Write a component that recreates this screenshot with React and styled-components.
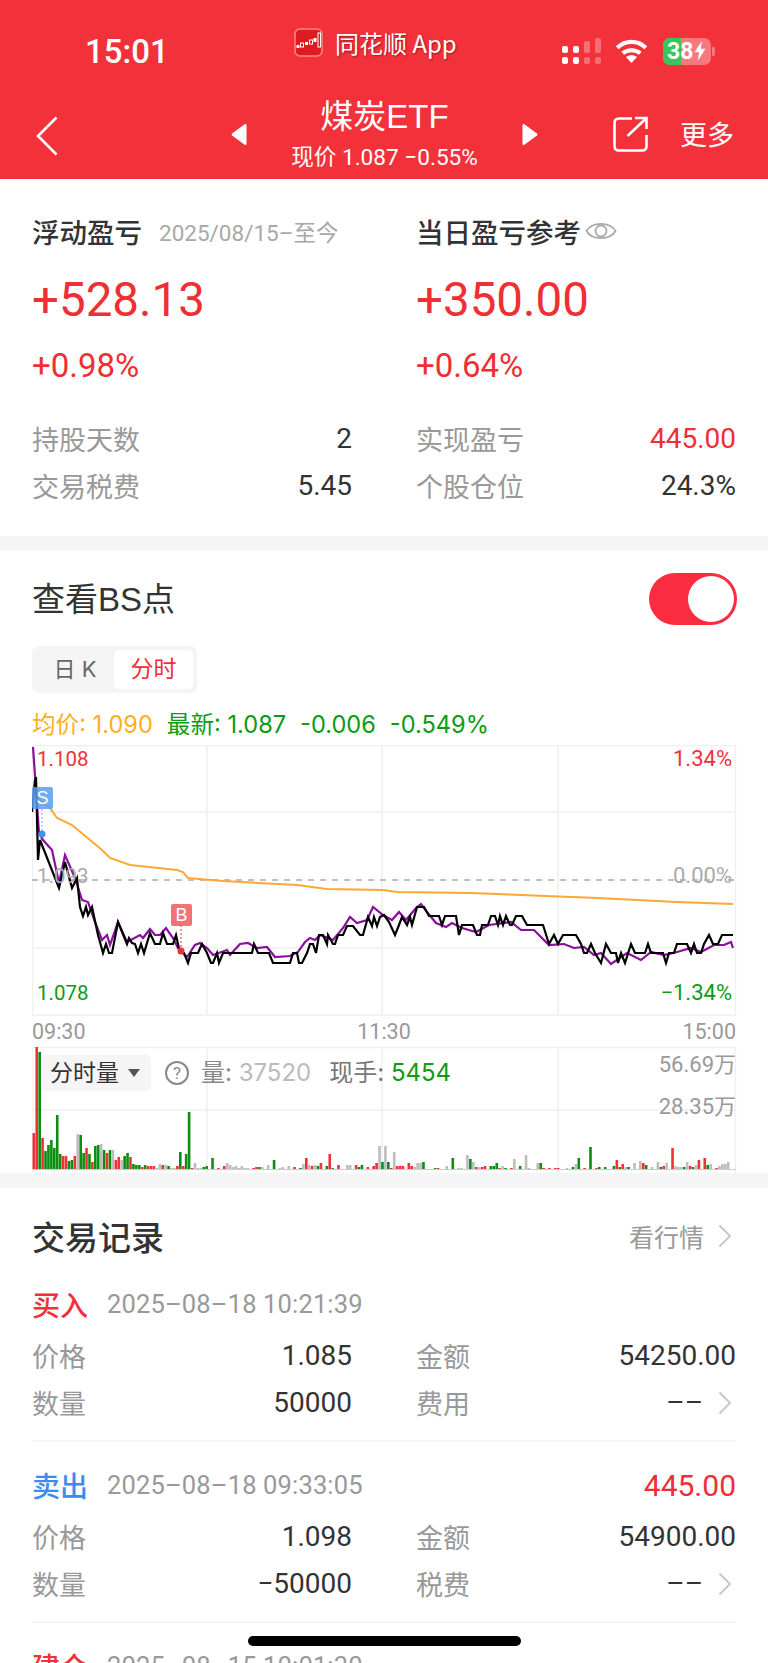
import React from "react";
import styled, { createGlobalStyle } from "styled-components";

const RED = "#ee2f35";
const GREEN = "#0a9c12";
const NUM = `Roboto, "Noto Sans CJK SC", sans-serif`;
const CJK = `"Noto Sans CJK SC", Roboto, sans-serif`;
const UI = `Inter, "Noto Sans CJK SC", sans-serif`;
const LATIN = `"Liberation Sans", "Noto Sans CJK SC", sans-serif`;

const GlobalStyle = createGlobalStyle`
  html, body { margin: 0; padding: 0; background: #fff; }
  body { font-family: ${CJK}; }
  * { box-sizing: border-box; }
`;

const Page = styled.div`
  position: relative;
  width: 768px;
  height: 1663px;
  overflow: hidden;
  background: #f5f5f5;
`;

/* header */
const Header = styled.header`
  height: 179px;
  background: #f3313b;
  color: #fff;
`;
const StatusBar = styled.div`
  display: grid;
  grid-template-columns: 209px 268px 1fr;
  grid-template-rows: 88px;
  padding-left: 85px;
`;
const Clock = styled.div`
  font: 500 33px/104px ${NUM};
`;
const AppBadge = styled.div`
  display: flex;
  align-items: center;
  gap: 12px;
  height: 88px;
  padding-bottom: 4px;
  font: 400 24px ${CJK};
  text-shadow: 1px 1px 2px rgba(90, 0, 0, 0.55);
`;
const StatusIcons = styled.div`
  display: flex;
  align-items: center;
  padding-top: 14px;
  gap: 15px;
`;
const Signal = styled.div`
  display: grid;
  grid-template-columns: repeat(4, 6px);
  column-gap: 5px;
  row-gap: 4px;
  align-items: end;
  width: 38px;
`;
const SignalDot = styled.i`
  display: block;
  height: ${(p) => p.$h}px;
  border-radius: 2px;
  background: rgba(255, 255, 255, ${(p) => (p.$dim ? 0.3 : 1)});
`;
const Battery = styled.div`
  position: relative;
  display: flex;
  width: 48px;
  height: 27px;
  border-radius: 7px;
  overflow: hidden;
  background: rgba(255, 255, 255, 0.35);
`;
const BatteryFill = styled.div`
  width: 18px;
  background: #35c759;
`;
const BatteryLabel = styled.div`
  position: absolute;
  inset: 0;
  display: flex;
  align-items: center;
  padding-left: 4px;
  font: 700 23px/27px ${NUM};
`;
const BatteryNub = styled.i`
  width: 3px;
  height: 9px;
  margin-left: -14px;
  border-radius: 0 2px 2px 0;
  background: rgba(255, 255, 255, 0.35);
`;
const NavBar = styled.div`
  display: grid;
  grid-template-columns: 231px 1fr 230px;
  height: 91px;
`;
const NavLeft = styled.div`
  padding: 28px 0 0 36px;
`;
const NavCenter = styled.div`
  display: flex;
  justify-content: space-between;
  align-items: center;
  width: 307px;
  height: 91px;
  padding-top: 1px;
`;
const Ticker = styled.div`
  text-align: center;
`;
const TickerName = styled.div`
  font: 400 33px/38px ${LATIN};
`;
const TickerQuote = styled.div`
  font: 400 22.6px/26px ${NUM};
  margin-top: 9px;
  white-space: nowrap;
`;
const NavRight = styled.div`
  display: flex;
  justify-content: flex-end;
  align-items: center;
  gap: 32px;
  padding: 0 34px 0 0;
  font: 400 27px ${CJK};
`;

/* cards */
const Card = styled.section`
  display: flow-root;
  background: #fff;
  padding: 0 32px;
  margin-bottom: 15px;
`;
const SummaryGrid = styled.div`
  display: grid;
  grid-template-columns: 320px 320px;
  column-gap: 64px;
  height: 357px;
  padding-top: 32px;
`;
const SummaryTitle = styled.div`
  display: flex;
  align-items: center;
  height: 40px;
  font: 500 27.5px/40px ${CJK};
  color: #333;
  white-space: nowrap;
`;
const SummarySub = styled.span`
  font: 400 22.5px ${NUM};
  color: #a8a8a8;
  margin-left: 17px;
`;
const BigValue = styled.div`
  font: 450 47.5px/60px ${NUM};
  color: ${RED};
  margin-top: 19px;
`;
const Percent = styled.div`
  font: 400 33px/40px ${NUM};
  color: ${RED};
  margin-top: 16px;
  margin-bottom: 29px;
`;
const StatRow = styled.div`
  display: flex;
  justify-content: space-between;
  align-items: center;
  height: 47px;
`;
const StatLabel = styled.span`
  font: 400 27px ${CJK};
  color: #999;
`;
const StatValue = styled.span`
  font: 450 ${(p) => p.$size || 28}px ${NUM};
  color: ${(p) => p.$color || "#333"};
`;

/* BS chart */
const ChartTitleRow = styled.div`
  display: flex;
  justify-content: space-between;
  align-items: center;
  height: 52px;
  margin-top: 22px;
`;
const ChartTitle = styled.h2`
  margin: 0 0 4px;
  font: 400 33px ${LATIN};
  color: #333;
`;
const Toggle = styled.div`
  display: flex;
  align-items: center;
  justify-content: flex-end;
  width: 88px;
  height: 52px;
  margin-right: -1px;
  padding-right: 3px;
  border-radius: 26px;
  background: #fb2b40;
  i {
    width: 46px;
    height: 46px;
    border-radius: 50%;
    background: #fff;
  }
`;
const Tabs = styled.div`
  display: flex;
  width: 165px;
  height: 47px;
  margin-top: 21px;
  padding: 4px;
  border-radius: 7px;
  background: #f5f5f5;
`;
const Tab = styled.div`
  width: ${(p) => (p.$active ? 79 : 78)}px;
  border-radius: 5px;
  background: ${(p) => (p.$active ? "#fff" : "transparent")};
  color: ${(p) => (p.$active ? "#ee2f38" : "#666")};
  font: 400 ${(p) => (p.$active ? 23 : 22)}px/39px ${UI};
  text-align: center;
`;
const Legend = styled.div`
  display: flex;
  height: 32px;
  margin-top: 16px;
  font: 400 23.6px/32px ${UI};
  white-space: nowrap;
`;
const LegendItem = styled.span`
  color: ${(p) => p.$color};
  margin-right: 14px;
`;
const ChartWrap = styled.div`
  position: relative;
  width: 705px;
  height: 271px;
  margin-top: 4px;
`;
const Svg = styled.svg`
  display: block;
`;
const AxisLabel = styled.span`
  position: absolute;
  top: ${(p) => p.$top}px;
  ${(p) => (p.$right !== undefined ? `right: ${p.$right}px;` : `left: ${p.$left}px;`)}
  font: 400 ${(p) => p.$size || 20.5}px/24px ${NUM};
  color: ${(p) => p.$color};
`;
const Marker = styled.span`
  position: absolute;
  left: ${(p) => p.$left}px;
  top: ${(p) => p.$top}px;
  width: 21px;
  height: 22px;
  border-radius: 2px;
  background: ${(p) => p.$bg};
  color: #fff;
  font: 400 18px/22px "Liberation Sans", sans-serif;
  text-align: center;
`;
const TimeAxis = styled.div`
  display: flex;
  justify-content: space-between;
  height: 31px;
  font: 400 21.5px/31px ${NUM};
  color: #999;
`;
const VolumeWrap = styled.div`
  position: relative;
  width: 705px;
  height: 126px;
`;
const VolumeBar = styled.div`
  position: absolute;
  left: 10px;
  top: 8px;
  display: flex;
  align-items: center;
  font: 400 24px/36px ${UI};
  white-space: nowrap;
`;
const VolumeChip = styled.div`
  display: flex;
  align-items: center;
  gap: 9px;
  width: 109px;
  height: 36px;
  padding-left: 8px;
  border-radius: 4px;
  background: #f5f5f5;
  color: #333;
  font-size: 23px;
  i {
    width: 0;
    height: 0;
    border: 6px solid transparent;
    border-top: 8px solid #555;
    border-bottom: 0;
  }
`;
const HelpIcon = styled.span`
  width: 24px;
  height: 24px;
  margin: 0 12px 0 14px;
  border: 2px solid #888;
  border-radius: 50%;
  color: #888;
  font: 400 17px/20px ${NUM};
  text-align: center;
`;
const VolumeText = styled.span`
  color: ${(p) => p.$color};
  margin-right: ${(p) => p.$gap || 0}px;
`;

/* trades */
const TradesHead = styled.div`
  display: flex;
  justify-content: space-between;
  align-items: center;
  height: 50px;
  margin-top: 23px;
`;
const TradesTitle = styled.h2`
  margin: 0;
  font: 500 33px ${CJK};
  color: #333;
`;
const MoreLink = styled.div`
  display: flex;
  align-items: center;
  gap: 14px;
  padding-right: 4px;
  font: 400 25px ${CJK};
  color: #999;
`;
const Trade = styled.div`
  padding-top: 21px;
  padding-bottom: 14px;
  border-bottom: 2px solid #f6f6f6;
`;
const TradeHead = styled.div`
  display: flex;
  align-items: center;
  height: 44px;
  margin-top: ${(p) => p.$top || 0}px;
  margin-bottom: 6px;
`;
const TradeSide = styled.span`
  font: 500 28px ${CJK};
  color: ${(p) => p.$color};
`;
const TradeTime = styled.span`
  flex: 1;
  margin-left: 19px;
  font: 400 25.5px ${NUM};
  letter-spacing: 0.15px;
  color: #999;
`;
const TradeGrid = styled.div`
  display: grid;
  grid-template-columns: 320px 320px;
  column-gap: 64px;
`;
const DashCell = styled.span`
  display: flex;
  align-items: center;
  gap: 15px;
  padding-right: 4px;
`;
const HomeBar = styled.div`
  position: absolute;
  left: 248px;
  top: 1636px;
  width: 273px;
  height: 10px;
  border-radius: 5px;
  background: #000;
`;

const blackLine =
  "32,812 35,780 36,777 38,860 40,840 59,888 65,862 72,888 77,878 80,907 83,916 86,907 88,915 92,907 98,935 103,953 106,944 109,953 112,953 118,922 127,944 129,938 132,943 135,944 138,953 141,944 144,953 150,933 155,944 160,944 163,933 167,944 173,944 176,935 180,953 184,953 188,963 191,953 198,953 202,944 207,953 211,963 213,963 217,953 219,963 223,953 252,953 254,944 258,953 269,953 273,963 290,963 293,953 297,953 299,963 302,963 307,953 310,944 313,944 316,953 319,935 323,935 327,944 328,935 333,944 335,944 338,935 343,935 347,926 353,926 360,935 363,935 368,917 372,926 374,917 377,926 380,917 384,915 " +
  "389,922 395,935 399,925 402,917 407,925 410,917 412,925 417,907 424,907 429,916 439,916 442,925 445,916 456,916 459,935 462,925 473,925 477,935 480,935 482,925 488,925 491,916 495,916 498,925 500,916 503,925 506,916 510,925 512,925 516,916 522,916 527,925 543,925 549,944 554,935 558,944 563,935 576,935 581,944 584,953 587,953 591,944 595,953 601,963 606,944 611,953 616,953 618,963 621,953 625,963 631,944 635,953 645,953 648,944 651,953 663,953 666,963 669,953 674,953 677,944 687,944 691,953 694,944 697,953 701,953 704,944 709,935 713,944 718,944 722,935 733,935";
const purpleLine =
  "33,747 39,833 43,840 52,850 59,883 65,855 75,878 82,900 88,902 95,922 102,940 107,935 110,945 118,922 127,942 140,935 143,938 150,929 155,935 160,935 166,928 173,938 178,948 187,957 195,945 200,943 207,948 213,955 227,950 230,955 240,944 248,943 257,948 267,947 275,957 290,956 298,952 305,942 310,938 315,940 320,935 333,940 343,928 350,917 357,923 367,920 373,907 383,915 " +
  "392,920 399,912 406,920 416,908 421,904 427,912 436,923 446,927 452,923 462,928 476,932 489,925 511,922 521,930 534,930 549,945 564,944 574,948 584,947 594,955 601,953 611,964 627,953 641,960 651,952 664,955 677,952 691,948 701,952 714,945 724,945 731,942 733,948";
const orangeLine =
  "33,788 40,800 50,808 57,818 72,825 90,840 102,850 110,858 130,865 177,870 183,872 188,878 223,881 297,885 327,889 383,890 397,892 471,893 597,898 677,902 733,904";

const volumeBars = (
  "r36 r122 g117 r31 g18 g24 g29 g21 g54 g15 r13 r13 g8 g9 r13 x35 g34 g16 r21 g15 r7 g23 g24 x25 g19 r16 g19 x19 r9 r12 x9 g13 g16 r12 g5 " +
  "g4 g4 r2 g4 r3 r3 r3 x1 x5 r4 x4 g3 x1 x1 r3 g17 r3 g15 g57 r1 x6 x1 x1 g2 g3 x0 g11 x0 r1 x0 r3 x6 x4 x2 x3 x1 x3 x1 x1 x0 r1 r2 g2 x2 x0 x4 x0 g9 x0 x1 x2 x0 x3 x0 r2 x0 g1 x5 r11 x4 r3 x4 g3 r6 x0 g3 r15 g1 x0 r4 x0 x0 x4 x4 x0 r4 g2 g4 x0 r2 x0 r3 r6 " +
  "x23 g7 x23 g7 r1 x17 r3 r3 r3 x0 r6 r3 x2 x6 x6 g7 x0 x0 x0 g1 r1 x0 x0 x3 x0 g11 x0 x1 x1 x0 x14 g10 x7 r2 x2 r2 r3 x0 g3 g3 g6 r1 x3 g1 x0 r1 x10 x0 g3 x0 x14 x1 x0 x0 x6 g6 r1 x0 r1 x0 r1 r1 x0 x0 x1 x0 g2 x5 g11 x0 r1 x0 g22 x0 r1 g2 x0 g2 x0 x0 g3 r9 g2 r5 x2 g2 x0 x6 x0 x8 r6 g4 x0 x2 x0 x7 g2 r3 x6 x0 r21 x3 x2 x2 g2 x7 r3 g2 x4 r9 x0 r11 g4 x5 x0 r1 x3 x5 x5 x7"
)
  .split(" ")
  .map((s) => ({ tone: s[0], h: Number(s.slice(1)) }));

const barColor = { r: "#f1303a", g: "#0a8f10", x: "#bdbdbd" };

function PriceChart() {
  return (
    <Svg width="705" height="271" viewBox="32 745 705 271">
      <g stroke="#f0f0f0" strokeWidth="1.5" fill="none">
        <rect x="32.5" y="745.5" width="703" height="269.5" />
        <path d="M32 812H736M32 948H736M207 745V1015M382 745V1015M558 745V1015" />
      </g>
      <path d="M32 880H736" stroke="#aaa" strokeWidth="1.5" strokeDasharray="6 6" />
      <polyline points={orangeLine} fill="none" stroke="#ffa733" strokeWidth="2" />
      <polyline points={purpleLine} fill="none" stroke="#8a0f9c" strokeWidth="2.2" />
      <polyline points={blackLine} fill="none" stroke="#000" strokeWidth="2.2" />
      <path d="M42 809V832" stroke="#a9cbfa" strokeWidth="1.5" strokeDasharray="2 2" />
      <circle cx="42" cy="834" r="3.5" fill="#4a8fe8" />
      <path d="M181 925V948" stroke="#f47373" strokeWidth="1.5" strokeDasharray="2 2" />
      <circle cx="181" cy="951" r="3.5" fill="#e8303a" />
    </Svg>
  );
}

function VolumeChart() {
  return (
    <Svg width="705" height="126" viewBox="32 1047 705 126">
      <g stroke="#f0f0f0" strokeWidth="1.5" fill="none">
        <path d="M32 1047.5H736M32 1110H736M32 1047V1173M207 1047V1173M382 1047V1173M558 1047V1173M735.5 1047V1173" />
      </g>
      {volumeBars.map((b, i) =>
        b.h > 0 ? (
          <rect
            key={i}
            x={32.5 + i * 2.93}
            y={1169 - b.h}
            width="2.6"
            height={b.h}
            fill={barColor[b.tone]}
          />
        ) : null
      )}
      <path d="M32 1169.5H736" stroke="#ccc" strokeWidth="1" />
    </Svg>
  );
}

const Chevron = () => (
  <svg width="14" height="24" viewBox="0 0 14 24" fill="none">
    <path d="M1.5 1.5 12 12 1.5 22.5" stroke="#c8c8c8" strokeWidth="2" />
  </svg>
);

function TradeRecord({ side, color, time, amount, price, total, qty, feeLabel }) {
  return (
    <Trade>
      <TradeHead>
        <TradeSide $color={color}>{side}</TradeSide>
        <TradeTime>{time}</TradeTime>
        {amount && <StatValue $size={30} $color={RED}>{amount}</StatValue>}
      </TradeHead>
      <TradeGrid>
        <StatRow>
          <StatLabel>价格</StatLabel>
          <StatValue>{price}</StatValue>
        </StatRow>
        <StatRow>
          <StatLabel>金额</StatLabel>
          <StatValue>{total}</StatValue>
        </StatRow>
        <StatRow>
          <StatLabel>数量</StatLabel>
          <StatValue>{qty}</StatValue>
        </StatRow>
        <StatRow>
          <StatLabel>{feeLabel}</StatLabel>
          <DashCell>
            <StatValue>––</StatValue>
            <Chevron />
          </DashCell>
        </StatRow>
      </TradeGrid>
    </Trade>
  );
}

export default function App() {
  return (
    <Page>
      <GlobalStyle />
      <Header>
        <StatusBar>
          <Clock>15:01</Clock>
          <AppBadge>
            <svg width="29" height="29" viewBox="0 0 29 29">
              <rect x="1" y="1" width="27" height="27" rx="5" fill="#de1b22" stroke="#f88" strokeWidth="1.5" />
              <g fill="#fff">
                <rect x="2.5" y="17" width="3" height="3" />
                <rect x="6.5" y="15" width="3" height="4" fill="none" stroke="#fff" strokeWidth="1" />
                <rect x="11" y="14" width="3" height="3" />
                <rect x="15.5" y="12" width="3" height="4" fill="none" stroke="#fff" strokeWidth="1" />
                <rect x="19.5" y="10" width="3" height="4" />
                <rect x="24" y="5" width="2.5" height="14" fill="none" stroke="#fff" strokeWidth="1" />
              </g>
            </svg>
            <span>同花顺 App</span>
          </AppBadge>
          <StatusIcons>
            <Signal>
              <SignalDot $h={7} />
              <SignalDot $h={7} />
              <SignalDot $h={12} $dim />
              <SignalDot $h={15} $dim />
              <SignalDot $h={7} />
              <SignalDot $h={7} />
              <SignalDot $h={7} $dim />
              <SignalDot $h={7} $dim />
            </Signal>
            <svg width="33" height="24" viewBox="0 0 35 26" fill="none" stroke="#fff" strokeWidth="4.4">
              <path d="M2 9.5C11 1 24 1 33 9.5" />
              <path d="M8 15.5C13 11 22 11 27 15.5" />
              <path d="M17.5 26 11.5 19.5C15 17 20 17 23.5 19.5Z" fill="#fff" stroke="none" />
            </svg>
            <Battery>
              <BatteryFill />
              <BatteryLabel>
                38
                <svg width="14" height="20" viewBox="0 0 14 22">
                  <path d="M9 0 1 12.5H6L4.5 22 13 8.5H8Z" fill="#fff" />
                </svg>
              </BatteryLabel>
            </Battery>
            <BatteryNub />
          </StatusIcons>
        </StatusBar>
        <NavBar>
          <NavLeft>
            <svg width="22" height="40" viewBox="0 0 22 40" fill="none">
              <path d="M20.5 1.5 2 20 20.5 38.5" stroke="#fff" strokeWidth="2.6" />
            </svg>
          </NavLeft>
          <NavCenter>
            <svg width="16" height="23" viewBox="0 0 16 23">
              <path d="M14 1Q15.5.5 15.5 2.5V20.5Q15.5 22.5 14 22L1 12.5Q.2 11.5 1 10.5Z" fill="#fff" />
            </svg>
            <Ticker>
              <TickerName>煤炭ETF</TickerName>
              <TickerQuote>现价 1.087 −0.55%</TickerQuote>
            </Ticker>
            <svg width="16" height="23" viewBox="0 0 16 23">
              <path d="M2 1Q.5.5.5 2.5V20.5Q.5 22.5 2 22L15 12.5Q15.8 11.5 15 10.5Z" fill="#fff" />
            </svg>
          </NavCenter>
          <NavRight>
            <svg width="35" height="36" viewBox="0 0 35 36" fill="none" stroke="#fff" strokeWidth="2.6">
              <path d="M19 2.5H6Q1.5 2.5 1.5 7V30Q1.5 34.5 6 34.5H29Q33.5 34.5 33.5 30V19" />
              <path d="M14.5 20 33 2.5M22 2H33.5V13" />
            </svg>
            <span>更多</span>
          </NavRight>
        </NavBar>
      </Header>

      <Card>
        <SummaryGrid>
          <div>
            <SummaryTitle>
              浮动盈亏<SummarySub>2025/08/15–至今</SummarySub>
            </SummaryTitle>
            <BigValue>+528.13</BigValue>
            <Percent>+0.98%</Percent>
            <StatRow>
              <StatLabel>持股天数</StatLabel>
              <StatValue>2</StatValue>
            </StatRow>
            <StatRow>
              <StatLabel>交易税费</StatLabel>
              <StatValue>5.45</StatValue>
            </StatRow>
          </div>
          <div>
            <SummaryTitle>
              当日盈亏参考
              <svg width="32" height="24" viewBox="0 0 32 24" fill="none" stroke="#aaa" strokeWidth="1.8" style={{ marginLeft: 4 }}>
                <path d="M1.5 12C7 2.5 25 2.5 30.5 12 25 21.5 7 21.5 1.5 12Z" />
                <circle cx="16" cy="12" r="5.5" />
              </svg>
            </SummaryTitle>
            <BigValue>+350.00</BigValue>
            <Percent>+0.64%</Percent>
            <StatRow>
              <StatLabel>实现盈亏</StatLabel>
              <StatValue $color={RED}>445.00</StatValue>
            </StatRow>
            <StatRow>
              <StatLabel>个股仓位</StatLabel>
              <StatValue>24.3%</StatValue>
            </StatRow>
          </div>
        </SummaryGrid>
      </Card>

      <Card>
        <ChartTitleRow>
          <ChartTitle>查看BS点</ChartTitle>
          <Toggle>
            <i />
          </Toggle>
        </ChartTitleRow>
        <Tabs>
          <Tab>日 K</Tab>
          <Tab $active>分时</Tab>
        </Tabs>
        <Legend>
          <LegendItem $color="#ffae1a">均价: 1.090</LegendItem>
          <LegendItem $color={GREEN}>最新: 1.087</LegendItem>
          <LegendItem $color={GREEN}>-0.006</LegendItem>
          <LegendItem $color={GREEN}>-0.549%</LegendItem>
        </Legend>
        <ChartWrap>
          <PriceChart />
          <AxisLabel $left={5} $top={2} $color="#f1303a">1.108</AxisLabel>
          <AxisLabel $right={5} $top={2} $size={22} $color="#f1303a">1.34%</AxisLabel>
          <AxisLabel $left={5} $top={119} $color="#aaa">1.093</AxisLabel>
          <AxisLabel $right={5} $top={119} $size={22} $color="#aaa">0.00%</AxisLabel>
          <AxisLabel $left={5} $top={236} $color={GREEN}>1.078</AxisLabel>
          <AxisLabel $right={5} $top={236} $size={22} $color={GREEN}>−1.34%</AxisLabel>
          <Marker $left={0} $top={42} $bg="rgba(90,155,240,0.85)">S</Marker>
          <Marker $left={139} $top={159} $bg="rgba(240,90,95,0.85)">B</Marker>
        </ChartWrap>
        <TimeAxis>
          <span>09:30</span>
          <span>11:30</span>
          <span>15:00</span>
        </TimeAxis>
        <VolumeWrap>
          <VolumeChart />
          <VolumeBar>
            <VolumeChip>
              分时量
              <i />
            </VolumeChip>
            <HelpIcon>?</HelpIcon>
            <VolumeText $color="#888">量: </VolumeText>
            <VolumeText $color="#bbb" $gap={18}>&nbsp;37520</VolumeText>
            <VolumeText $color="#777">现手:&nbsp;</VolumeText>
            <VolumeText $color={GREEN}>5454</VolumeText>
          </VolumeBar>
          <AxisLabel $right={1} $top={6} $size={22} $color="#999">56.69万</AxisLabel>
          <AxisLabel $right={1} $top={48} $size={22} $color="#999">28.35万</AxisLabel>
        </VolumeWrap>
      </Card>

      <Card>
        <TradesHead>
          <TradesTitle>交易记录</TradesTitle>
          <MoreLink>
            看行情
            <Chevron />
          </MoreLink>
        </TradesHead>
        <TradeRecord
          side="买入"
          color="#f1303a"
          time="2025–08–18 10:21:39"
          price="1.085"
          total="54250.00"
          qty="50000"
          feeLabel="费用"
        />
        <TradeRecord
          side="卖出"
          color="#3b8cf0"
          time="2025–08–18 09:33:05"
          amount="445.00"
          price="1.098"
          total="54900.00"
          qty="−50000"
          feeLabel="税费"
        />
        <TradeHead $top={21}>
          <TradeSide $color="#f1303a">建仓</TradeSide>
          <TradeTime>2025–08–15 10:01:30</TradeTime>
        </TradeHead>
      </Card>
      <HomeBar />
    </Page>
  );
}
